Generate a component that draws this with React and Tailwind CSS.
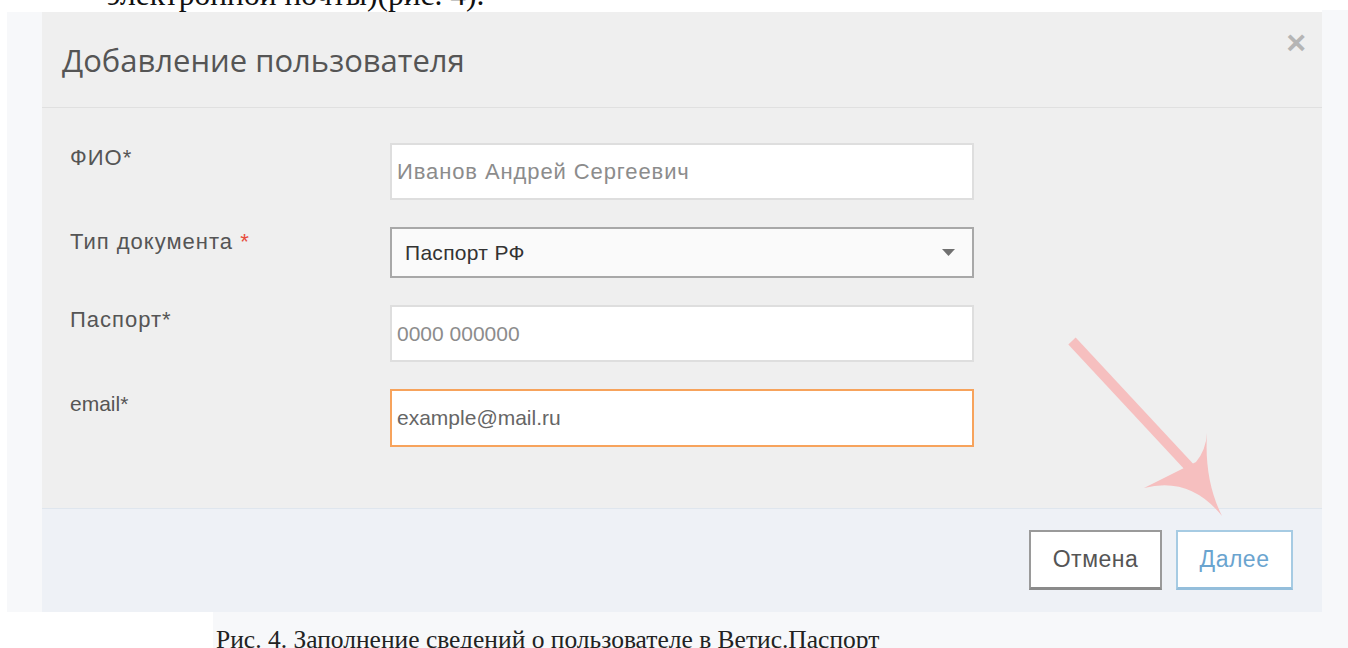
import React from "react";

const fields = [
  { label: "ФИО*", value: "Иванов Андрей Сергеевич", h: "h-[57px]", wide: true, wideValue: true },
  { label: "Тип документа", required: true, value: "Паспорт РФ", select: true, h: "h-[51px]", wide: true },
  { label: "Паспорт*", value: "0000 000000", h: "h-[57px]", wide: true },
  { label: "email*", value: "example@mail.ru", focus: true, h: "h-[58px]" },
];

function Field({ f }) {
  if (f.select) {
    return (
      <div className={`w-[584px] ${f.h} flex items-center justify-between border-2 border-[#a8a8a8] bg-[#fafafa] pl-[13px] pr-[17px]`}>
        <span className="text-[21px] tracking-[0.3px] text-[#333] font-['Liberation_Sans',sans-serif]">{f.value}</span>
        <svg width="13" height="7" viewBox="0 0 13 7">
          <path d="M0 0h13L6.5 7z" fill="#707070" />
        </svg>
      </div>
    );
  }
  const border = f.focus ? "border-[#f7a35c]" : "border-[#dedede]";
  const color = f.focus ? "text-[#666]" : "text-[#8c8c8c]";
  const size = f.wideValue ? "text-[22px] tracking-[0.9px]" : "text-[21px]";
  return (
    <div className={`w-[584px] ${f.h} flex items-center border-2 ${border} bg-white pl-[5px]`}>
      <span className={`${size} ${color} font-['Liberation_Sans',sans-serif]`}>{f.value}</span>
    </div>
  );
}

export default function App() {
  return (
    <div className="w-[1348px] h-[648px] bg-white overflow-hidden relative">
      {/* tail of the previous paragraph */}
      <div className="h-[12px] overflow-hidden">
        <p className="-mt-[23px] pl-[107px] text-[31.5px] leading-[36px] text-[#111] font-['Liberation_Serif',serif]">
          электронной почты)(рис. 4).
        </p>
      </div>

      <div className="ml-[7px] bg-[#f7f8fa] flex">
        <div className="ml-[35px] w-[1280px] bg-[#efefef]">
          {/* header */}
          <div className="h-[96px] border-b border-[#e0e0e0] flex items-start justify-between pl-[20px] pr-[16px]">
            <h1 className="mt-[27px] text-[31px] leading-[42px] text-[#555] font-['Open_Sans',sans-serif]">
              Добавление пользователя
            </h1>
            <span className="mt-[10px] text-[34px] leading-[40px] text-[#b5b5b5] font-bold font-['Liberation_Sans',sans-serif]">
              ×
            </span>
          </div>

          {/* body */}
          <div className="h-[400px] pt-[35px] pl-[28px] flex flex-col gap-[27px]">
            {fields.map((f) => (
              <div key={f.label} className="flex items-start">
                <div
                  className={`w-[320px] pt-[2px] leading-[26px] text-[#555] font-['Liberation_Sans',sans-serif] ${
                    f.wide ? "text-[22px] tracking-[1px]" : "text-[21px]"
                  }`}
                >
                  {f.label}
                  {f.required && <span className="text-[#e74c3c]"> *</span>}
                </div>
                <Field f={f} />
              </div>
            ))}
          </div>

          {/* footer */}
          <div className="h-[104px] bg-[#eef1f6] border-t border-[#dfe6ee] flex items-start justify-end gap-[14px] pt-[21px] pr-[29px]">
            <button className="w-[133px] h-[60px] bg-white border-2 border-[#9a9a9a] border-b-[3px] border-b-[#8a8a8a] text-[23px] tracking-[0.5px] text-[#555] font-['Liberation_Sans',sans-serif]">
              Отмена
            </button>
            <button className="w-[117px] h-[60px] bg-white border-2 border-[#a6cbe3] border-b-[3px] border-b-[#94bedb] text-[23px] tracking-[0.5px] text-[#6aa4cf] font-['Liberation_Sans',sans-serif]">
              Далее
            </button>
          </div>
        </div>
      </div>

      {/* caption */}
      <div className="ml-[213px] h-[37px] bg-[#f7f8fa] pl-[3px] pt-[13px]">
        <p className="text-[25.5px] leading-[30px] whitespace-nowrap text-[#222] font-['Liberation_Serif',serif]">
          Рис. 4. Заполнение сведений о пользователе в Ветис.Паспорт
        </p>
      </div>

      {/* right margin strip */}
      <div className="absolute left-[1322px] top-[10px] w-[26px] h-[638px] bg-[#f7f8fa]" />

      {/* pointer arrow */}
      <svg className="absolute left-0 top-0 pointer-events-none" width="1348" height="648">
        <line x1="1072" y1="341" x2="1192" y2="470" stroke="#f6bfbf" strokeWidth="10" />
        <path d="M1222 516 Q1190 476 1144 488 Q1180 470 1196 462 Q1206 450 1207 433 Q1204 480 1222 516z" fill="#f6bfbf" />
      </svg>
    </div>
  );
}
